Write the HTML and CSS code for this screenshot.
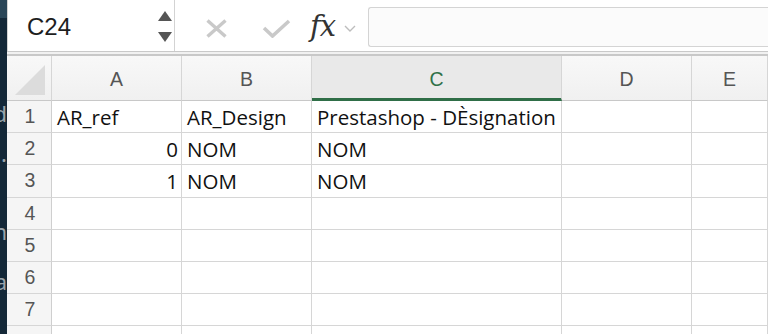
FILE: index.html
```html
<!DOCTYPE html>
<html>
<head>
<meta charset="utf-8">
<link rel="stylesheet" href="styles.css">
</head>
<body>
<div class="app">
  <div class="sidebar">
    <div class="side-top"></div>
    <div class="side-line l1"><span>ld</span></div>
    <div class="side-line l2"><span>.</span></div>
    <div class="side-line l3"><span>n</span></div>
    <div class="side-line l4"><span>a</span></div>
  </div>
  <div class="main">
    <div class="toolbar">
      <div class="namebox">
        <span class="cellref">C24</span>
        <div class="spinner">
          <svg width="14" height="10" viewBox="0 0 14 10"><path d="M7 0 L14 10 L0 10 Z" fill="#555"/></svg>
          <svg width="14" height="10" viewBox="0 0 14 10"><path d="M0 0 L14 0 L7 10 Z" fill="#555"/></svg>
        </div>
      </div>
      <div class="tools">
        <svg class="ic-x" width="23" height="19" viewBox="0 0 23 19"><path d="M2.5 1.5 L20.5 17.5 M20.5 1.5 L2.5 17.5" stroke="#c9c9c9" stroke-width="3.4" fill="none"/></svg>
        <svg class="ic-check" width="29" height="19" viewBox="0 0 29 19"><path d="M2 9 L10.5 17 L27 2" stroke="#c9c9c9" stroke-width="3.6" fill="none"/></svg>
        <span class="fx">fx</span>
        <svg class="ic-chev" width="12" height="7" viewBox="0 0 12 7"><path d="M1 1 L6 6 L11 1" stroke="#bdbdbd" stroke-width="1.4" fill="none"/></svg>
      </div>
      <div class="formula"></div>
    </div>
    <div class="sep"></div>
    <div class="grid">
      <div class="hd corner"><svg width="30" height="30" viewBox="0 0 30 30"><path d="M30 0 L30 30 L0 30 Z" fill="#dcdcdc"/></svg></div>
      <div class="hd col">A</div>
      <div class="hd col">B</div>
      <div class="hd col sel">C</div>
      <div class="hd col">D</div>
      <div class="hd col">E</div>

      <div class="rh">1</div>
      <div class="c">AR_ref</div>
      <div class="c">AR_Design</div>
      <div class="c">Prestashop - DÈsignation</div>
      <div class="c"></div>
      <div class="c"></div>

      <div class="rh">2</div>
      <div class="c num">0</div>
      <div class="c">NOM</div>
      <div class="c">NOM</div>
      <div class="c"></div>
      <div class="c"></div>

      <div class="rh">3</div>
      <div class="c num">1</div>
      <div class="c">NOM</div>
      <div class="c">NOM</div>
      <div class="c"></div>
      <div class="c"></div>

      <div class="rh">4</div>
      <div class="c"></div><div class="c"></div><div class="c"></div><div class="c"></div><div class="c"></div>

      <div class="rh">5</div>
      <div class="c"></div><div class="c"></div><div class="c"></div><div class="c"></div><div class="c"></div>

      <div class="rh">6</div>
      <div class="c"></div><div class="c"></div><div class="c"></div><div class="c"></div><div class="c"></div>

      <div class="rh">7</div>
      <div class="c"></div><div class="c"></div><div class="c"></div><div class="c"></div><div class="c"></div>

      <div class="rh">8</div>
      <div class="c"></div><div class="c"></div><div class="c"></div><div class="c"></div><div class="c"></div>
    </div>
  </div>
</div>
</body>
</html>
```
FILE: styles.css
```css
html, body {
  margin: 0;
  padding: 0;
  width: 768px;
  height: 334px;
  overflow: hidden;
  background: #ffffff;
}
.app {
  display: flex;
  width: 768px;
  height: 334px;
  overflow: hidden;
  font-family: "Liberation Sans", Arial, sans-serif;
}
.sidebar {
  width: 7px;
  flex: none;
  background: #142838;
  display: flex;
  flex-direction: column;
  overflow: hidden;
}
.side-top {
  height: 18px;
  flex: none;
  background: #2a4658;
}
.side-line {
  flex: none;
  display: flex;
  justify-content: flex-end;
  overflow: hidden;
  color: #9aa4ab;
  font-family: "Noto Sans", sans-serif;
  font-size: 22px;
  line-height: 30px;
  white-space: nowrap;
}
.side-line.l1 { margin-top: 80px; }
.side-line.l2 { margin-top: 10px; }
.side-line.l3 { margin-top: 48px; }
.side-line.l4 { margin-top: 20px; }

.main {
  flex: 1;
  display: flex;
  flex-direction: column;
  min-width: 0;
  overflow: hidden;
}
.toolbar {
  flex: none;
  height: 51px;
  display: flex;
  align-items: flex-start;
  background: #ffffff;
  border-bottom: 1px solid #c9c9c9;
}
.namebox {
  width: 168px;
  height: 51px;
  box-sizing: border-box;
  border-left: 1px solid #d3d3d3;
  border-right: 1px solid #d3d3d3;
  display: flex;
  align-items: center;
  justify-content: space-between;
  padding: 0 2px 0 19px;
  flex: none;
}
.cellref {
  font-size: 24px;
  color: #1e1e1e;
  margin-top: 2px;
}
.spinner {
  display: flex;
  flex-direction: column;
  gap: 11px;
  margin-top: 1px;
}
.spinner svg { display: block; }
.tools {
  display: flex;
  align-items: center;
  height: 51px;
  padding-left: 30px;
  width: 193px;
  flex: none;
  box-sizing: border-box;
}
.ic-x { margin-top: 6px; flex: none; }
.ic-check { margin-left: 34px; margin-top: 6px; flex: none; }
.fx {
  font-family: "DejaVu Serif", "Liberation Serif", serif;
  font-style: italic;
  font-size: 29px;
  color: #333333;
  margin-left: 19px;
  letter-spacing: -1px;
  margin-top: 0px;
}
.ic-chev { margin-left: 9px; margin-top: 6px; flex: none; }
.formula {
  flex: 1;
  margin-top: 7px;
  height: 40px;
  box-sizing: border-box;
  border: 1px solid #d4d4d4;
  border-right: none;
  border-radius: 3px 0 0 3px;
  background: #fbfbfb;
}
.sep {
  flex: none;
  height: 2px;
  background: #f1f1f1;
  border-bottom: 2px solid #c8c8c8;
}
.grid {
  flex: none;
  display: grid;
  grid-template-columns: 45px 130px 130px 250px 130px 1fr;
  grid-template-rows: 45px repeat(8, 32.2px);
}
.hd {
  background: linear-gradient(#f8f8f8, #f0f0f0);
  border-right: 1px solid #d6d6d6;
  border-bottom: 1px solid #c8c8c8;
  display: flex;
  align-items: center;
  justify-content: center;
  font-size: 19.5px;
  color: #555555;
  box-sizing: border-box;
  padding-top: 2px;
}
.corner {
  align-items: flex-end;
  justify-content: flex-end;
  padding: 0 6px 5px 0;
}
.corner svg { display: block; }
.hd.sel {
  background: #e9e9e9;
  color: #2f7148;
  border-bottom: 3px solid #2f6e47;
  padding-top: 4px;
}
.rh {
  background: #f5f5f5;
  border-right: 1px solid #cfcfcf;
  border-bottom: 1px solid #d6d6d6;
  display: flex;
  align-items: center;
  justify-content: center;
  font-size: 19.5px;
  color: #555555;
  box-sizing: border-box;
  padding-left: 2px;
}
.c {
  border-right: 1px solid #d6d6d6;
  border-bottom: 1px solid #d6d6d6;
  box-sizing: border-box;
  display: flex;
  align-items: center;
  padding: 0 3px 0 5px;
  font-family: "Open Sans", "Noto Sans", sans-serif;
  font-size: 20.5px;
  color: #111111;
  white-space: nowrap;
  overflow: hidden;
}
.c.num { justify-content: flex-end; }
```
